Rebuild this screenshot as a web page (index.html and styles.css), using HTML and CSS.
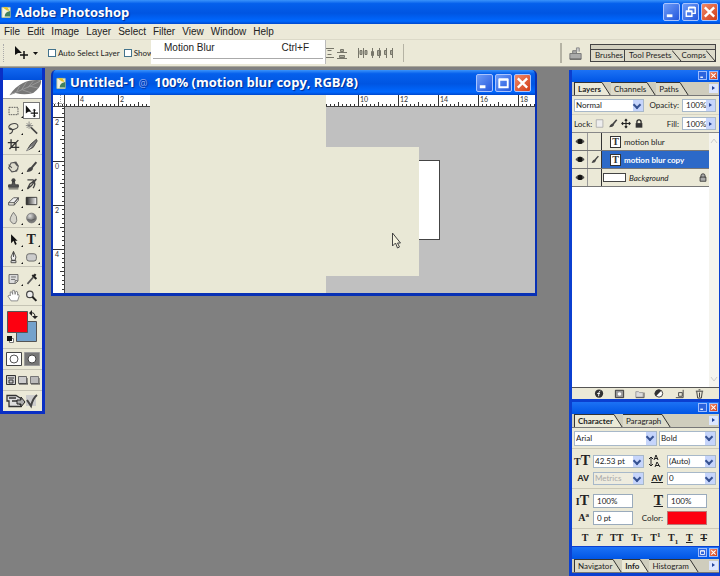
FILE: index.html
```html
<!DOCTYPE html>
<html lang="en">
<head>
<meta charset="utf-8">
<title>Adobe Photoshop</title>
<link rel="stylesheet" href="styles.css">
</head>
<body>
<svg class="defs" aria-hidden="true">
  <defs>
    <pattern id="ticks-h" width="40" height="12" patternUnits="userSpaceOnUse" x="25">
      <path d="M.5 0V12M4.500 9V12M8.500 9V12M12.500 9V12M16.500 9V12M20.500 7V12M24.500 9V12M28.500 9V12M32.500 9V12M36.500 9V12" stroke="#333"/>
    </pattern>
    <pattern id="ticks-v" width="12" height="44" patternUnits="userSpaceOnUse" y="10">
      <path d="M0 .5H12M9 4.500H12M9 9.500H12M9 13.500H12M9 18.500H12M7 22.500H12M9 26.500H12M9 31.500H12M9 35.500H12M9 40.500H12" stroke="#333"/>
    </pattern>
    <linearGradient id="fade"><stop offset="0" stop-color="#222"/><stop offset="1" stop-color="#fff"/></linearGradient>
    <radialGradient id="ball" cx=".35" cy=".3"><stop offset="0" stop-color="#ddd"/><stop offset="1" stop-color="#777"/></radialGradient>
    <symbol id="min" viewBox="0 0 16 16"><path d="M3 12h6" stroke="#fff" stroke-width="3"/></symbol>
    <symbol id="max" viewBox="0 0 16 16"><path d="M3.500 4.500h9v8h-9zM3 4h10" fill="none" stroke="#fff" stroke-width="2"/></symbol>
    <symbol id="restore" viewBox="0 0 16 16"><path d="M6 6V3.500h7v6h-3M3.500 7.500h6v5h-6zM3 7h7M6 3h7" fill="none" stroke="#fff" stroke-width="1.500"/></symbol>
    <symbol id="x" viewBox="0 0 16 16"><path d="M3 3l10 10M13 3l-10 10" stroke="#fff" stroke-width="2.500"/></symbol>
    <symbol id="eye" viewBox="0 0 12 10"><path d="M1 5Q6-1 11 5Q6 10 1 5z" fill="#777" stroke="#222"/><circle cx="6" cy="5" r="3" fill="#111"/></symbol>
    <symbol id="brush" viewBox="0 0 16 16"><path d="M14 2L8 9" stroke="#444" stroke-width="2.500"/><path d="M8 8Q4 8 2 14Q8 14 10 10z" fill="#444"/></symbol>
    <symbol id="move" viewBox="0 0 16 16"><path d="M1 1v10l3-2 4 0z" fill="#111"/><path d="M11.500 6v9M7 10.500h9" stroke="#111" stroke-width="1.500"/><path d="M10 7.500L11.500 5.500 13 7.500M10 13.500l1.500 2 1.500-2" fill="none" stroke="#111"/></symbol>
    <symbol id="lock" viewBox="0 0 12 12"><path d="M3.500 6V4a2.500 2.500 0 0 1 5 0V6" fill="none" stroke="#222" stroke-width="1.500"/><path d="M2 5.500h8V11H2z" fill="#333"/></symbol>
    <symbol id="slant" viewBox="0 0 10 14" preserveAspectRatio="none"><path d="M0 .5L9 14H0z" fill="currentColor"/><path d="M0 .5L9 14" stroke="#222" fill="none"/></symbol>
    <symbol id="doc" viewBox="0 0 12 14"><path d="M1 2h9v11H1z" fill="#f4f2e0" stroke="#b6c6a0"/><path d="M2 2q6-2 7 4l-3-1z" fill="#e5c52b"/><path d="M4 12q0-5 6-6v6z" fill="#43825d"/></symbol>
  </defs>
</svg>
<div class="app">
  <header class="titlebar main-title">
    <svg class="app-icon"><use href="#doc"/></svg>
    <h1>Adobe Photoshop</h1>
    <div class="win-buttons">
      <button aria-label="Minimize"><svg><use href="#min"/></svg></button>
      <button aria-label="Restore"><svg><use href="#restore"/></svg></button>
      <button class="close" aria-label="Close"><svg><use href="#x"/></svg></button>
    </div>
  </header>
  <nav class="menubar">
    <button>File</button><button>Edit</button><button>Image</button><button>Layer</button><button>Select</button><button>Filter</button><button>View</button><button>Window</button><button>Help</button>
  </nav>
  <div class="options">
    <span class="grip"></span>
    <button class="current-tool" aria-label="Move tool"><svg viewBox="0 0 24 16"><path d="M1 1v9l3-2 4 0z" fill="#111"/><path d="M10 6v8M6 10h8" stroke="#111" stroke-width="1.500"/><path d="M19 7h5l-2.500 3z" fill="#111"/></svg></button>
    <label><input type="checkbox">Auto Select Layer</label>
    <label><input type="checkbox">Show</label>
    <div class="align">
      <svg viewBox="0 0 70 14" fill="#aaa99a" stroke="#77766a"><path d="M0 2.500h9M0 11.500h9M2.500 4.500h4M2.500 8.500h4M12 6.500h10M12 12.500h10M15.500 3.500h3v2h-3zM14.500 9.500h5v2h-5z"/><path d="M33.500 2v10M38.500 2v10M35 4.500h2v4h-2zM40 4.500h2v4h-2zM47.500 2v10M54.500 2v10M46.500 5.500h2v4h-2zM52.500 4.500h3v5h-3zM61.500 2v10M67.500 2v10M59.500 4.500h2v4h-2zM65.500 4.500h2v4h-2z"/></svg>
    </div>
    <div class="well-area">
      <button class="browse" aria-label="File Browser"><svg viewBox="0 0 16 16"><path d="M2 8h12v6H2zM5 8V5h4v3" fill="#aaa" stroke="#777"/><path d="M9 6V2h3v4" fill="#ccc" stroke="#888"/><path d="M2 14h12" stroke="#555"/></svg></button>
      <div class="well"><button>Brushes</button><button>Tool Presets</button><svg><use href="#slant"/></svg><button>Comps</button><svg><use href="#slant"/></svg></div>
    </div>
    <div class="dropdown" role="menu">
      <button role="menuitem"><span>Motion Blur</span><span>Ctrl+F</span></button>
    </div>
  </div>

  <main class="workspace">
    <section class="toolbox" aria-label="Tools">
      <div class="tool-title"></div>
      <svg class="feather" viewBox="0 0 40 18"><path d="M7 15Q12 7 20 3T39 0Q40 7 31 13Q22 16 13 13Q10 13 7 15z" fill="#777"/><path d="M7 15Q20 10 38 1M14 12l3-6M19 10l5-8M25 8l6-7M20 10l9 3M27 6l9 2" stroke="#999" fill="none"/></svg>
      <div class="tools first">
        <button aria-label="Marquee"><svg viewBox="0 0 16 16"><path d="M2.500 3.500h11v9h-11z" fill="none" stroke="#444" stroke-dasharray="2 1"/></svg></button>
        <button class="active nofly" aria-label="Move"><svg><use href="#move"/></svg></button>
        <button aria-label="Lasso"><svg viewBox="0 0 16 16"><path d="M4 10Q0 6 5 3.500T13 4Q15 8 9 9.500Q5 11 4 9t3 1q0 4-4 5" fill="none" stroke="#444" stroke-width="1.300"/></svg></button>
        <button class="nofly" aria-label="Magic wand"><svg viewBox="0 0 16 16"><path d="M7 7l8 8" stroke="#444" stroke-width="2"/><path d="M5 0v9M1 5h9M2 2l6 6M8 2L2 8" stroke="#777"/></svg></button>
        <button class="nofly" aria-label="Crop"><svg viewBox="0 0 16 16"><path d="M5 1v10h10M1 5h10v10M3 13L14 2" fill="none" stroke="#333" stroke-width="1.600"/></svg></button>
        <button aria-label="Slice"><svg viewBox="0 0 16 16"><path d="M14 1L7 7l-5 8 8-4 5-8z" fill="#777" stroke="#333"/><path d="M2 15l6-5" stroke="#eee"/></svg></button>
      </div>
      <div class="tools">
        <button aria-label="Healing brush"><svg viewBox="0 0 16 16"><path d="M5 3l6-1 3 5-2 6-6 1-4-5zM2 5l4 4M10 13l4-3M9 2l4 5" fill="#dedccd" stroke="#555" stroke-width="1.300"/></svg></button>
        <button aria-label="Brush"><svg><use href="#brush"/></svg></button>
        <button aria-label="Clone stamp"><svg viewBox="0 0 16 16"><circle cx="8" cy="3.500" r="2.500" fill="#444"/><path d="M7 5h2l1 4h4v3H2V9h4zM2 14h12" fill="#555" stroke="#333"/></svg></button>
        <button aria-label="History brush"><svg viewBox="0 0 16 16"><path d="M14 2l-6 8-5 4 3-6zM3 3h7Q14 7 10 13" fill="none" stroke="#444" stroke-width="1.600"/></svg></button>
        <button aria-label="Eraser"><svg viewBox="0 0 16 16"><path d="M2 10L8 4h6l-5 6zM2 10v3h7v-3l5-6v3l-5 6" fill="#eee" stroke="#444"/></svg></button>
        <button aria-label="Gradient"><svg viewBox="0 0 16 16"><path d="M1.500 3.500h13v9h-13z" fill="url(#fade)" stroke="#222"/></svg></button>
        <button aria-label="Blur"><svg viewBox="0 0 16 16"><path d="M8 1Q3 8 4 11T8 15T12 11T8 1z" fill="#d5d4cc" stroke="#666"/></svg></button>
        <button aria-label="Sponge"><svg viewBox="0 0 16 16"><circle cx="8" cy="8" r="6" fill="url(#ball)" stroke="#777"/><path d="M3 10q5 2 10-1" fill="none" stroke="#555"/></svg></button>
      </div>
      <div class="tools">
        <button aria-label="Path selection"><svg viewBox="0 0 16 16"><path d="M5 1v11l3-3 2 5 2-1-2-4h3z" fill="#111"/></svg></button>
        <button class="type" aria-label="Type">T</button>
        <button aria-label="Pen"><svg viewBox="0 0 16 16"><path d="M8 1L5 8l1 4h4l1-4zM8 2v6M5 12.500h6V15H5z" fill="#eee" stroke="#333"/></svg></button>
        <button aria-label="Shape"><svg viewBox="0 0 16 16"><rect x="2" y="4" width="12" height="9" rx="3" fill="#ccc" stroke="#555"/></svg></button>
      </div>
      <div class="tools">
        <button aria-label="Notes"><svg viewBox="0 0 16 16"><path d="M2.500 2.500h11v8l-3 3h-8zM5 5.500h6M5 8.500h5M13 10h-3v3" fill="#ddd" stroke="#555"/></svg></button>
        <button aria-label="Eyedropper"><svg viewBox="0 0 16 16"><path d="M3 14l7-8" stroke="#555" stroke-width="2"/><path d="M9 3l5 5M10 6l3-4" stroke="#222" stroke-width="2.500"/></svg></button>
        <button class="nofly" aria-label="Hand"><svg viewBox="0 0 16 16"><path d="M5 14L1 8l2-1 1 1V3h2l1 3V1h2l1 5 1-4 2 1v4l1-1 1 2-2 6z" fill="#fff" stroke="#777"/></svg></button>
        <button class="nofly" aria-label="Zoom"><svg viewBox="0 0 16 16"><circle cx="6" cy="6" r="4" fill="#eee" stroke="#444" stroke-width="1.500"/><path d="M9 9l5 5" stroke="#222" stroke-width="2.500"/></svg></button>
      </div>
      <div class="swatches">
        <svg viewBox="0 0 36 38"><path d="M12.500 13.500h20v20h-20z" fill="#74a2cc" stroke="#555"/><path d="M3.500 3.500h20v21h-20z" fill="#fd0010" stroke="#555"/><path d="M27 5q4-1 4 4" fill="none" stroke="#222"/><path d="M28 2v6l-3-3zM28 8h6l-3 3z" fill="#222"/><path d="M5.500 30.500h4v4h-4z" fill="#fff" stroke="#777"/><path d="M3 28h5v5H3z" fill="#111"/></svg>
      </div>
      <div class="modes">
        <button class="boxed" aria-label="Standard mode"><svg viewBox="0 0 16 14"><path d="M.5.5h15v13H.5z" fill="#fff" stroke="#444"/><circle cx="8" cy="7" r="4" fill="#fff" stroke="#555"/></svg></button>
        <button aria-label="Quick mask"><svg viewBox="0 0 16 14"><path d="M.5.5h15v13H.5z" fill="#777" stroke="#999"/><circle cx="8" cy="7" r="4" fill="#fff" stroke="#444"/></svg></button>
      </div>
      <div class="modes screens">
        <button aria-label="Standard screen"><svg viewBox="0 0 10 10"><path d="M.5.5h9v9h-9zM2 3h6M3 5h4v3H3z" fill="#ccc" stroke="#333"/></svg></button>
        <button aria-label="Full screen with menu"><svg viewBox="0 0 10 10"><path d="M.5 1.500h8v7h-8z" fill="#ccc" stroke="#666"/><path d="M1 9h9V3" fill="none" stroke="#333"/></svg></button>
        <button aria-label="Full screen"><svg viewBox="0 0 10 10"><path d="M.5 1.500h8v7h-8z" fill="#bbb" stroke="#777"/><path d="M1 9h9V3" fill="none" stroke="#444"/></svg></button>
      </div>
      <div class="modes jump">
        <button aria-label="Jump to ImageReady"><svg viewBox="0 0 32 16"><path d="M1 2.500h9l5 3v8H3V8H1zM3 5h7M6 8h8v4" fill="#ddd" stroke="#333" stroke-width="1.300"/><path d="M11 7h4V4l4 5-4 5v-3h-4z" fill="#aaa" stroke="#222"/><path d="M20 2h10v11H20z" fill="#ccc"/><path d="M21 7l4 6q2-8 6-11" fill="none" stroke="#444" stroke-width="2"/></svg></button>
      </div>
    </section>

    <section class="document">
      <header class="titlebar">
        <svg class="app-icon"><use href="#doc"/></svg>
        <h2>Untitled-1 <span class="at">@</span>&nbsp; 100% (motion blur copy, RGB/8)</h2>
        <div class="win-buttons">
          <button aria-label="Minimize"><svg><use href="#min"/></svg></button>
          <button aria-label="Maximize"><svg><use href="#max"/></svg></button>
          <button class="close" aria-label="Close"><svg><use href="#x"/></svg></button>
        </div>
      </header>
      <div class="doc-body">
        <svg class="ruler-h"><rect width="100%" height="12" fill="url(#ticks-h)"/><path d="M11.500 0V12M0 11.500H600" stroke="#444"/><path d="M7.500 0V12M0 8.500H12" stroke="#aaa" stroke-dasharray="1 1"/>
          <g class="num"><text x="27" y="7">4</text><text x="67" y="7">2</text><text x="307" y="7">10</text><text x="347" y="7">12</text><text x="387" y="7">14</text><text x="427" y="7">16</text><text x="467" y="7">18</text></g></svg>
        <svg class="ruler-v"><rect width="12" height="100%" fill="url(#ticks-v)"/><path d="M11.500 0V300" stroke="#444"/>
          <g class="num"><text x="2" y="18">2</text><text x="2" y="62">0</text><text x="2" y="106">2</text><text x="2" y="150">4</text></g></svg>
        <div class="canvas-area">
          <div class="canvas"></div>
        </div>
        <div class="menu-pane filters"></div>
        <div class="menu-pane submenu"></div>
        <svg class="cursor" viewBox="0 0 10 18"><path d="M1.500 1v13l3-3 2 5 2-1-2-4h3z" fill="#f4f2dd" stroke="#444"/></svg>
      </div>
    </section>

    <aside class="dock">
      <section class="palette layers">
        <header><button aria-label="Minimize"><svg><use href="#min"/></svg></button><button class="close" aria-label="Close"><svg><use href="#x"/></svg></button></header>
        <div class="tabs"><button class="on">Layers</button><svg class="on"><use href="#slant"/></svg><button>Channels</button><svg><use href="#slant"/></svg><button>Paths</button><svg><use href="#slant"/></svg><i class="more"></i></div>
        <div class="blend">
          <span class="select"><select aria-label="Blend mode"><option>Normal</option></select></span>
          <label for="opacity">Opacity:</label>
          <span class="spin"><input id="opacity" value="100%"><button aria-label="Opacity slider"></button></span>
        </div>
        <div class="blend locks">
          <span>Lock:</span>
          <svg viewBox="0 0 12 12"><path d="M1.500 1.500h8v9h-8z" fill="#eee" stroke="#aaa"/></svg>
          <svg><use href="#brush"/></svg>
          <svg viewBox="0 0 12 12"><path d="M6 1v10M1 6h10M4.500 2.500L6 1l1.500 1.500M4.500 9.500L6 11l1.500-1.500M2.500 4.500L1 6l1.500 1.500M9.500 4.500L11 6 9.500 7.500" fill="none" stroke="#222" stroke-width="1.300"/></svg>
          <svg><use href="#lock"/></svg>
          <label for="fill">Fill:</label>
          <span class="spin"><input id="fill" value="100%"><button aria-label="Fill slider"></button></span>
        </div>
        <div class="layer-list">
          <ul>
            <li><span class="cell"><svg><use href="#eye"/></svg></span><span class="cell"></span><span class="name"><b class="t">T</b>motion blur</span></li>
            <li class="selected"><span class="cell"><svg><use href="#eye"/></svg></span><span class="cell"><svg><use href="#brush"/></svg></span><span class="name"><b class="t">T</b>motion blur copy</span></li>
            <li class="bg"><span class="cell"><svg><use href="#eye"/></svg></span><span class="cell"></span><span class="name"><i class="thumb"></i>Background<svg viewBox="0 0 12 12"><path d="M3.500 6V4a2.500 2.500 0 0 1 5 0V6M2.500 5.500h7v5h-7z" fill="#aaa" stroke="#333"/></svg></span></li>
          </ul>
          <div class="scroll"><svg viewBox="0 0 8 8"><path d="M1 6l3-4 3 4" fill="none" stroke="#ccc"/></svg><svg viewBox="0 0 8 8"><path d="M1 2l3 4 3-4" fill="none" stroke="#ccc"/></svg></div>
        </div>
        <footer>
          <button aria-label="Layer style"><svg viewBox="0 0 12 12"><circle cx="5.500" cy="6" r="4.500" fill="#333"/><path d="M7 3q-2 0-2 6M3.500 6h3" fill="none" stroke="#fff"/></svg></button>
          <button aria-label="Layer mask"><svg viewBox="0 0 12 12"><path d="M1.500 2.500h9v8h-9z" fill="#999" stroke="#333"/><circle cx="6" cy="6.500" r="2" fill="#fff"/></svg></button>
          <button aria-label="New group"><svg viewBox="0 0 12 12"><path d="M2 4h3l1 1h4v5H2z" fill="#ddd" stroke="#999"/><path d="M2 10.500h9V5" fill="none" stroke="#555"/></svg></button>
          <button aria-label="Adjustment layer"><svg viewBox="0 0 12 12"><circle cx="5.500" cy="6" r="4" fill="#fff" stroke="#333"/><path d="M2 9a4 4 0 0 1 6-6z" fill="#333"/></svg></button>
          <button aria-label="New layer"><svg viewBox="0 0 12 12"><path d="M2 10.500h8V2M5 5h4v4H5z" fill="none" stroke="#444"/></svg></button>
          <button aria-label="Delete layer"><svg viewBox="0 0 12 12"><path d="M2 3.500h8M5 2h2M3 4l1 7h4l1-7M6 5v5" fill="none" stroke="#333"/></svg></button>
        </footer>
      </section>

      <section class="palette character">
        <header><button aria-label="Minimize"><svg><use href="#min"/></svg></button><button class="close" aria-label="Close"><svg><use href="#x"/></svg></button></header>
        <div class="tabs"><button class="on">Character</button><svg class="on"><use href="#slant"/></svg><button>Paragraph</button><svg><use href="#slant"/></svg><i class="more"></i></div>
        <div class="fonts">
          <span class="select"><select aria-label="Font family"><option>Arial</option></select></span>
          <span class="select"><select aria-label="Font style"><option>Bold</option></select></span>
        </div>
        <div class="metrics">
          <span class="glyph"><small>T</small>T</span><span class="select"><select aria-label="Font size"><option>42.53 pt</option></select></span>
          <svg class="leading" viewBox="0 0 14 14"><path d="M6 6l2-5 2 5M7 4.500h3M7 13l2-5 3 5M8 11.500h3M3 3v9M1 5l2-2 2 2M1 10l2 2 2-2" fill="none" stroke="#222"/></svg><span class="select"><select aria-label="Leading"><option>(Auto)</option></select></span>
          <span class="glyph sans">AV</span><span class="select off"><select aria-label="Kerning" disabled><option>Metrics</option></select></span>
          <span class="glyph sans under">AV</span><span class="select"><select aria-label="Tracking"><option>0</option></select></span>
        </div>
        <div class="metrics scale">
          <span class="glyph"><small>I</small>T</span><input aria-label="Vertical scale" value="100%">
          <span class="glyph under">T</span><input aria-label="Horizontal scale" value="100%">
          <span class="glyph shift">A<sup>a</sup></span><input aria-label="Baseline shift" value="0 pt">
          <label for="color">Color:</label><button id="color" class="color"></button>
        </div>
        <div class="styles"><button><b>T</b></button><button><i>T</i></button><button>TT</button><button>T<small>T</small></button><button>T<sup>1</sup></button><button>T<sub>1</sub></button><button><u>T</u></button><button><s>T</s></button></div>
      </section>

      <section class="palette info">
        <header><button aria-label="Restore"><svg><use href="#max"/></svg></button><button class="close" aria-label="Close"><svg><use href="#x"/></svg></button></header>
        <div class="tabs"><button>Navigator</button><svg><use href="#slant"/></svg><button class="on">Info</button><svg class="on"><use href="#slant"/></svg><button>Histogram</button><svg><use href="#slant"/></svg><i class="more"></i></div>
      </section>
    </aside>
  </main>
</div>
</body>
</html>
```
FILE: styles.css
```css
* { box-sizing: border-box; }
body { margin: 0; overflow: hidden; background: #808080; color: #222; font: 8px/12px Lato, "Liberation Sans", sans-serif; }
button, input, select { margin: 0; padding: 0; border: 0; border-radius: 0; background: none; color: inherit; font: inherit; }
input, select { min-width: 0; }
h1, h2, ul { margin: 0; padding: 0; list-style: none; }
svg { display: block; flex: none; }
.defs { position: absolute; width: 0; height: 0; }
.app { display: flex; flex-direction: column; height: 100vh; }

/* Title bars */
.titlebar { display: flex; align-items: center; height: 24px; padding: 0 4px 0 3px; gap: 3px; background: linear-gradient(#3a93fb, #0560ec 15%, #0055e2 55%, #0068ff 88%, #0047cc); color: #fff; }
.titlebar h1, .titlebar h2 { flex: 1; font: bold 13px/20px "Open Sans", "Liberation Sans", sans-serif; white-space: nowrap; text-shadow: 1px 1px 1px #002c8f; }
.main-title { padding: 0 2px 0 1px; }
.at { color: #8fa8f0; font-size: 10px; font-weight: normal; }
.app-icon { width: 11px; height: 14px; }
.win-buttons { display: flex; gap: 2px; }
.win-buttons button { width: 17px; height: 18px; border: 1px solid #a9c4ff; border-radius: 2px; background: linear-gradient(135deg, #6d9cf8, #2457dc); }
.win-buttons svg, .palette header svg { width: 100%; height: 100%; }
.win-buttons .close, .palette header .close { background: linear-gradient(135deg, #f08a68, #d23d18); }

/* Menu and options */
.menubar { display: flex; gap: 7px; height: 16px; padding-left: 4px; background: #ece9d8; border-bottom: 1px solid #dcd9c8; }
.menubar button, .dropdown button { font: 10px/14px "Liberation Sans", sans-serif; }
.options { position: relative; display: flex; align-items: center; height: 27px; background: #ebe9d7; border-bottom: 1px solid #aaa89c; }
.options label { display: flex; align-items: center; gap: 2px; margin-right: 4px; white-space: nowrap; }
.options label:last-of-type { margin-right: 0; }
.options input { appearance: none; width: 8px; height: 8px; border: 1px solid #43738c; background: #fff; }
.grip { width: 2px; height: 18px; margin: 0 9px 0 3px; border-left: 1px dotted #aaa; }
.current-tool { width: 24px; height: 16px; margin-right: 10px; }
.align { margin-left: 172px; padding-right: 8px; border-right: 1px solid #b5b3a4; }
.align svg { width: 70px; height: 18px; }
.well-area { display: flex; align-items: center; gap: 7px; margin-left: auto; margin-right: 4px; padding-left: 6px; border-left: 2px solid #b5b3a4; }
.browse { width: 15px; height: 20px; }
.well { display: flex; width: 126px; height: 18px; padding: 5px 0 0 4px; border: 1px solid #444; background: linear-gradient(#d2d0bf 4px, #444 4px, #444 5px, #dddbca 5px); color: #222; }
.well button { line-height: 11px; white-space: nowrap; }
.well button:first-child { padding-right: 1px; border-right: 1px solid #444; }
.well button:nth-child(2) { padding-left: 4px; }
.well svg { width: 10px; height: 11px; color: #dddbca; }
.dropdown { position: absolute; left: 151px; top: 0; z-index: 2; width: 175px; height: 24px; padding: 1px 2px 0; background: #fff; border-right: 1px solid #bbb; }
.dropdown button { display: flex; justify-content: space-between; width: 100%; height: 18px; padding: 0 14px 0 11px; border-bottom: 1px solid #aaa; }

.workspace { position: relative; flex: 1; min-height: 0; }

/* Toolbox */
.toolbox { position: absolute; left: 0; top: 1px; width: 45px; border: solid #0a2fc4; border-width: 0 3px 3px; background: #ebe9d7; }
.tool-title { height: 12px; background: linear-gradient(#1268f0, #0050dc); }
.feather { width: 100%; height: 18px; background: #fff; }
.tools { display: grid; grid-template-columns: 1fr 1fr; grid-auto-rows: 17px; padding: 3px 2px 1px; border-top: 1px solid #c5c3b4; }
.tools.first { border-color: #999; }
.tools button { position: relative; display: flex; justify-content: center; align-items: center; }
.tools svg { width: 13px; height: 14px; }
.tools button::after { content: ""; position: absolute; right: 0; bottom: 1px; border: 1px solid; border-color: transparent #111 #111 transparent; }
.tools .nofly::after { display: none; }
.tools .active { border: 1px solid #777; background: #fff; }
.tools .type { font: bold 14px/14px "Liberation Serif", serif; }
.swatches { padding: 2px 1px; border-top: 1px solid #c5c3b4; }
.swatches svg { width: 36px; height: 38px; }
.modes { display: flex; gap: 2px; height: 21px; align-items: center; padding: 0 3px; border-top: 1px solid #c5c3b4; }
.modes svg { width: 16px; height: 14px; }
.screens svg { width: 10px; height: 10px; }
.jump svg { width: 32px; height: 16px; }

/* Document window */
.document { position: absolute; left: 51px; top: 3px; width: 486px; border: solid #0831b5; border-width: 0 2px 3px; border-radius: 5px 5px 0 0; overflow: hidden; background: #0831b5; }
.document .titlebar { height: 25px; }
.doc-body { position: relative; display: grid; grid-template: 12px 186px / 12px 1fr; }
.ruler-h { grid-column: 1 / 3; width: 100%; height: 12px; background: #fff; }
.ruler-v { width: 12px; height: 100%; background: #fff; }
.num { font-size: 7px; fill: #333; }
.canvas-area { position: relative; background: #c0c0c0; }
.canvas { position: absolute; left: 110px; top: 53px; width: 265px; height: 80px; border: 1px solid #444; background: #fff; }
.menu-pane { position: absolute; background: #e9e8d6; }
.filters { left: 97px; top: 0; width: 176px; bottom: 0; }
.submenu { left: 273px; top: 52px; width: 93px; height: 129px; }
.cursor { position: absolute; left: 338px; top: 137px; width: 10px; height: 18px; }

/* Palettes */
.dock { position: absolute; top: 3px; right: 0; bottom: 0; width: 151px; display: flex; flex-direction: column; }
.palette { background: #ebe9d7; border: solid #0b3fd0; border-width: 0 1px 3px 3px; display: flex; flex-direction: column; }
.palette header { display: flex; justify-content: flex-end; gap: 2px; height: 12px; flex: none; padding: 1px; background: linear-gradient(#1c72f5, #0055e5); }
.palette header button { width: 9px; height: 9px; border: 1px solid #9bbcff; background: #2c63dd; }
.tabs { display: flex; height: 14px; flex: none; padding-left: 2px; background: #cfcdbd; border-bottom: 1px solid #777; }
.tabs button { padding: 0 1px 0 3px; border-top: 1px solid #333; background: #dddbca; line-height: 12px; }
.tabs button:first-child { border-left: 1px solid #333; }
.tabs svg { width: 9px; height: 13px; color: #dddbca; }
.tabs button.on { background: #ebe9d7; font-weight: bold; }
.tabs svg.on { color: #ebe9d7; }
.more { width: 9px; height: 9px; margin: 2px 1px 0 auto; background: #dce6ff; }
.more::before, .spin button::before { content: ""; display: block; width: 0; margin: 2px 0 0 3px; border: solid transparent; border-width: 2px 0 2px 3px; border-left-color: #23439b; }
.layers { height: 333px; }
.blend { display: flex; align-items: center; gap: 3px; height: 18px; flex: none; padding: 0 3px 0 2px; }
.blend label { margin-left: auto; }
.select { position: relative; display: block; height: 13px; border: 1px solid #a7b8c9; background: #fff; }
.select select { display: block; appearance: none; width: 100%; height: 11px; padding: 0 12px 0 1px; line-height: 11px; }
.select::after { content: ""; position: absolute; right: 0; top: 0; bottom: 0; width: 10px; background: #c6d5fb; pointer-events: none; }
.select::before { content: ""; position: absolute; z-index: 1; right: 3px; top: 2px; width: 4px; height: 4px; border: solid #365292; border-width: 0 2px 2px 0; transform: rotate(45deg); pointer-events: none; }
.blend .select { width: 70px; }
.spin { display: flex; width: 34px; height: 13px; border: 1px solid #a7b8c9; background: #fff; }
.spin input { flex: 1; width: 20px; padding-left: 3px; }
.spin button { width: 9px; background: #c6d5fb; }
.spin button::before { margin: 0 0 0 3px; }
.locks { border-top: 1px solid #d4d2c3; }
.locks svg { width: 10px; height: 11px; }
.layer-list { flex: 1; display: flex; background: #fff; border-top: 1px solid #888; min-height: 0; }
.layer-list ul { flex: 1; }
.layer-list li { display: flex; height: 18px; border-bottom: 1px solid #777; }
.cell { display: flex; align-items: center; justify-content: center; width: 16px; border-right: 1px solid #999; background: #ebe9d7; }
.cell + .cell { width: 14px; border-right-color: #333; }
.cell svg { width: 10px; height: 9px; }
.name { flex: 1; display: flex; align-items: center; gap: 3px; padding-left: 8px; background: #ebe9d7; white-space: nowrap; }
.t { width: 11px; height: 12px; border: 1px solid #333; background: #fff; color: #333; text-align: center; font: bold 10px/10px "Liberation Serif", serif; }
.selected .name { background: #2c69c8; color: #fff; font-weight: bold; }
.bg .name { padding-left: 1px; font-style: italic; }
.thumb { width: 23px; height: 9px; border: 1px solid #444; background: #fff; }
.bg .name svg { width: 10px; height: 11px; margin: 0 1px 0 auto; }
.scroll { display: flex; flex-direction: column; justify-content: space-between; width: 10px; padding: 4px 1px; background: #f5f4ee; }
.scroll svg { width: 8px; height: 8px; }
.layers footer { display: flex; justify-content: flex-end; gap: 9px; height: 12px; flex: none; padding-right: 14px; border-top: 1px solid #555; }
.layers footer svg { width: 11px; height: 11px; }
.character { height: 145px; border-bottom-width: 1px; }
.character .tabs { margin-bottom: 3px; }
.fonts { display: grid; grid-template-columns: 83px 1fr; gap: 2px; padding: 0 3px 2px 2px; border-bottom: 1px solid #ccc9b8; }
.fonts .select { height: 15px; }
.fonts select { height: 13px; }
.metrics { display: grid; grid-template-columns: 15px 51px 15px 1fr; grid-auto-rows: 14px; gap: 3px 4px; padding: 5px 3px 3px 2px; border-bottom: 1px solid #ccc9b8; align-items: center; }
.metrics input { height: 14px; padding-left: 3px; border: 1px solid #9aabbc; background: #fff; }
.metrics.scale { grid-template-columns: 15px 40px 26px 40px; }
.metrics label { text-align: right; }
.off { color: #aaa; background: #eeecdf; }
.off select { opacity: 1; }
.glyph { font: bold 14px/14px "Liberation Serif", serif; text-align: right; white-space: nowrap; }
.glyph small { font-size: 10px; }
.leading { width: 14px; height: 14px; }
.glyph.shift { font-size: 10px; }
.shift sup { font-size: 7px; line-height: 0; }
.glyph.sans { font: bold 9px/11px "Liberation Sans", sans-serif; }
.under { text-decoration: underline; }
.styles { flex: 1; display: flex; align-items: center; justify-content: space-around; padding: 0 8px 0 6px; }
.styles button { font: bold 10px/12px "Liberation Serif", serif; white-space: nowrap; }
.styles small, .styles sup, .styles sub { font-size: 7px; line-height: 0; }
.color { height: 14px; border: 1px solid #b77; background: #fd0010; }
```
